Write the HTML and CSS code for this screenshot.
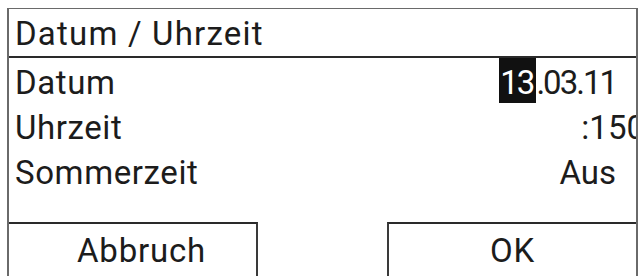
FILE: index.html
```html
<!DOCTYPE html>
<html lang="de">
<head>
<meta charset="utf-8">
<title>Datum / Uhrzeit</title>
<link rel="stylesheet" href="styles.css">
</head>
<body>
<div class="screen">
  <div class="title">Datum / Uhrzeit</div>
  <div class="rows">
    <div class="row"><span class="label">Datum</span><span class="value date"><span class="sel">13</span>.03.11</span></div>
    <div class="row"><span class="label">Uhrzeit</span><span class="value clip">:150</span></div>
    <div class="row"><span class="label">Sommerzeit</span><span class="value">Aus</span></div>
  </div>
  <div class="buttons">
    <div class="btn btn-cancel">Abbruch</div>
    <div class="btn btn-ok">OK</div>
  </div>
</div>
</body>
</html>
```

FILE: styles.css
```css
html, body {
  margin: 0;
  padding: 0;
  background: #ffffff;
}

body {
  width: 640px;
  height: 276px;
  overflow: hidden;
  font-family: Roboto, "Liberation Sans", sans-serif;
  color: #1c1c1c;
}

.screen {
  box-sizing: border-box;
  margin: 8px 0 0 7px;
  width: 631px;
  height: 268px;
  border-top: 1px solid #6a6a6a;
  border-left: 2px solid #6a6a6a;
  border-right: 2px solid #6a6a6a;
  display: flex;
  flex-direction: column;
  overflow: hidden;
}

.title {
  box-sizing: border-box;
  height: 49px;
  flex: none;
  border-bottom: 2px solid #2a2a2a;
  font-size: 33px;
  line-height: 44px;
  padding: 3px 0 0 6px;
  letter-spacing: 1.2px;
}

.rows {
  height: 164px;
  flex: none;
  display: flex;
  flex-direction: column;
  overflow: hidden;
}

.row {
  box-sizing: border-box;
  height: 45px;
  flex: none;
  display: flex;
  justify-content: space-between;
  font-size: 33px;
  line-height: 49px;
  padding-left: 6px;
  letter-spacing: 0.6px;
}

.value {
  padding-right: 20px;
  white-space: nowrap;
  letter-spacing: 0;
}

.value.date {
  letter-spacing: -2px;
  padding-right: 20px;
}

.value.clip {
  padding-right: 0;
  margin-right: -9px;
  overflow: hidden;
}

.sel {
  display: inline-block;
  background: #111111;
  color: #ffffff;
  height: 45px;
  padding: 0 3px 0 1px;
}

.buttons {
  display: flex;
  justify-content: space-between;
  flex: 1;
}

.btn {
  box-sizing: border-box;
  border-top: 2px solid #2a2a2a;
  font-size: 33px;
  line-height: 44px;
  padding-top: 5px;
  text-align: center;
  letter-spacing: 0.8px;
}

.btn-cancel {
  width: 249px;
  border-right: 2px solid #3a3a3a;
  padding-left: 18px;
}

.btn-ok {
  width: 249px;
  border-left: 2px solid #3a3a3a;
}
```
